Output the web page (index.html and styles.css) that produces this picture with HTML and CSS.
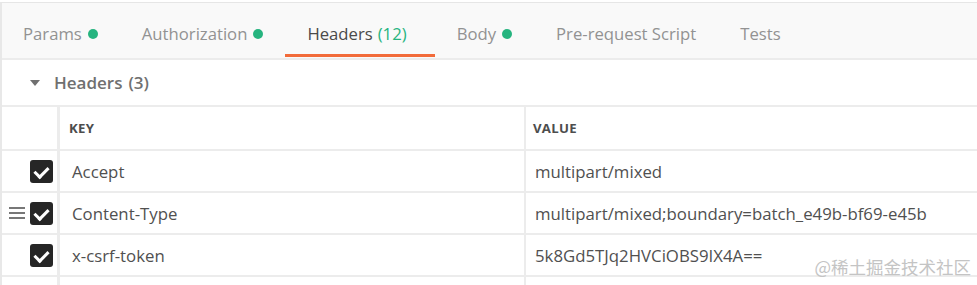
FILE: index.html
```html
<!DOCTYPE html>
<html lang="en">
<head>
    <meta charset="UTF-8">
    <title>Headers</title>
    <link rel="stylesheet" href="styles.css">
</head>
<body>
<div class="panel">
    <div class="tabs">
        <div class="tab">Params <span class="dot"></span></div>
        <div class="tab">Authorization <span class="dot"></span></div>
        <div class="tab active">Headers <span class="count">(12)</span></div>
        <div class="tab">Body <span class="dot"></span></div>
        <div class="tab">Pre-request Script</div>
        <div class="tab">Tests</div>
    </div>

    <div class="section-title">
        <span class="caret"></span>
        Headers <span class="num">(3)</span>
    </div>

    <div class="kv">
        <div class="row head">
            <div class="cell ctrl"></div>
            <div class="cell key">KEY</div>
            <div class="cell value">VALUE</div>
        </div>
        <div class="row">
            <div class="cell ctrl"><span class="check"></span></div>
            <div class="cell key">Accept</div>
            <div class="cell value">multipart/mixed</div>
        </div>
        <div class="row">
            <div class="cell ctrl"><span class="grip"></span><span class="check"></span></div>
            <div class="cell key">Content-Type</div>
            <div class="cell value">multipart/mixed;boundary=batch_e49b-bf69-e45b</div>
        </div>
        <div class="row">
            <div class="cell ctrl"><span class="check"></span></div>
            <div class="cell key">x-csrf-token</div>
            <div class="cell value">5k8Gd5TJq2HVCiOBS9IX4A==</div>
        </div>
        <div class="row last">
            <div class="cell ctrl"></div>
            <div class="cell key"></div>
            <div class="cell value"></div>
        </div>
    </div>

    <div class="watermark">@稀土掘金技术社区</div>
</div>
</body>
</html>
```

FILE: styles.css
```css
body {
    margin: 0;
    background: #fff;
    font-family: "Open Sans", "Noto Sans", sans-serif;
    overflow: hidden;
}

.panel {
    position: relative;
    margin-top: 2px;
    height: 282px;
    overflow: hidden;
    border-left: 2px solid #e8e8e8;
    border-top: 1px solid #e6e6e6;
}

.tabs {
    display: flex;
    height: 55px;
    background: #f9f9f9;
    border-bottom: 2px solid #ececec;
}

.tab {
    display: flex;
    align-items: center;
    padding: 10px 22px 0 21px;
    font-size: 16.7px;
    color: #929292;
    border-bottom: 3px solid transparent;
    margin-bottom: 1px;
    box-sizing: border-box;
}

.tab + .tab {
    padding-left: 22px;
}

.tab.active {
    color: #4a4a4a;
    border-bottom-color: #f26b3a;
    padding: 10px 28px 0 22px;
}

.tab .count {
    color: #26b47f;
    margin-left: 5px;
}

.dot {
    display: inline-block;
    width: 10px;
    height: 10px;
    border-radius: 50%;
    background: #26b47f;
    margin-left: 6px;
}

.section-title {
    display: flex;
    align-items: center;
    height: 45px;
    padding-left: 28px;
    font-size: 17px;
    font-weight: 600;
    color: #707070;
}

.section-title .num {
    margin-left: 6px;
}

.caret {
    width: 0;
    height: 0;
    border-left: 5px solid transparent;
    border-right: 5px solid transparent;
    border-top: 6px solid #707070;
    margin-right: 14px;
}

.kv {
    border-top: 2px solid #ececec;
}

.row {
    display: grid;
    grid-template-columns: 55px 467px 1fr;
    height: 42px;
    border-bottom: 2px solid #ececec;
    box-sizing: border-box;
}

.row.head {
    height: 44px;
}

.cell {
    display: flex;
    align-items: center;
    font-size: 16.8px;
    color: #505050;
}

.cell.key {
    border-left: 3px solid #ececec;
    padding-left: 12px;
}

.cell.value {
    border-left: 2px solid #ececec;
    padding-left: 9px;
}

.head .cell {
    font-size: 13.2px;
    font-weight: 700;
    color: #4d4d4d;
    letter-spacing: 0.3px;
}

.head .cell.key {
    padding-left: 9px;
}

.head .cell.value {
    padding-left: 7px;
}

.ctrl {
    justify-content: flex-end;
    padding-right: 4px;
}

.check {
    position: relative;
    width: 23px;
    height: 23px;
    border-radius: 3px;
    background: #262626;
}

.check::after {
    content: "";
    position: absolute;
    left: 7px;
    top: 4px;
    width: 6px;
    height: 11px;
    border-right: 3px solid #fff;
    border-bottom: 3px solid #fff;
    transform: rotate(45deg);
}

.grip {
    width: 16px;
    height: 2px;
    background: #777;
    box-shadow: 0 -5px 0 #777, 0 5px 0 #777;
    margin-right: 5px;
}

.watermark {
    position: absolute;
    right: 6px;
    bottom: 6px;
    font-family: "Noto Sans CJK SC", sans-serif;
    font-size: 17.5px;
    color: #c4c4c4;
}
```
